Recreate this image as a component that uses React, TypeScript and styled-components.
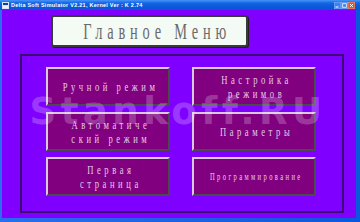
import React from "react";
import styled, { createGlobalStyle } from "styled-components";

const Global = createGlobalStyle`
  html, body { margin: 0; padding: 0; background: #0a5ce0; }
  body { width: 360px; height: 222px; overflow: hidden; }
  * { box-sizing: border-box; }
`;

const Window = styled.div`
  width: 360px;
  height: 222px;
  display: flex;
  flex-direction: column;
  background: linear-gradient(90deg, #2a6ef0 0%, #0a58dc 100%);
`;

const TitleBar = styled.div`
  height: 10px;
  display: flex;
  align-items: center;
  padding: 0 5px 0 2px;
  gap: 2px;
  background: linear-gradient(180deg, #4a94f8 0%, #1266e6 30%, #0a58d8 70%, #0a54d0 100%);
`;

const TitleText = styled.span`
  flex: 1;
  font-family: "Liberation Sans", Arial, sans-serif;
  font-weight: bold;
  font-size: 5.4px;
  letter-spacing: 0.3px;
  color: #ffffff;
  white-space: nowrap;
  line-height: 10px;
`;

const Controls = styled.div`
  display: flex;
  align-items: center;
`;

const Body = styled.div`
  flex: 1;
  margin: 0 4px 4px 2px;
  background: #8000ff;
  position: relative;
  display: flex;
  flex-direction: column;
  align-items: flex-start;
  padding: 5px 12px 5px 18px;
`;

const Header = styled.div`
  margin-left: 31px;
  width: 197px;
  height: 32px;
  background: #f4faf4;
  border: 2px solid #3a3a3a;
  border-radius: 3px;
  box-shadow: 1px 1px 0 #202020;
  display: flex;
  align-items: center;
  justify-content: center;
  overflow: hidden;
`;

const HeaderText = styled.span`
  display: inline-block;
  font-family: "Liberation Serif", "Times New Roman", serif;
  font-size: 24px;
  letter-spacing: 8px;
  color: #6a6a6a;
  transform: scaleX(0.6);
  white-space: nowrap;
  margin-left: 16px;
`;

const Frame = styled.div`
  margin-top: 7px;
  width: 324px;
  height: 159px;
  border: 2px solid #3c0c74;
  padding: 11px 26px 15px 24px;
  display: grid;
  grid-template-columns: 124px 124px;
  grid-template-rows: 39px 39px 39px;
  column-gap: 22px;
  row-gap: 6px;
`;

const MenuButton = styled.div`
  background: #800080;
  border-style: solid;
  border-width: 2px;
  border-color: #d8c8e0 #4a4a4a #4a4a4a #d8c8e0;
  display: flex;
  align-items: center;
  justify-content: center;
  overflow: hidden;
`;

const Label = styled.span<{ $size: number; $spacing: number }>`
  display: inline-block;
  font-family: "Liberation Serif", "Times New Roman", serif;
  font-size: ${(p) => p.$size}px;
  letter-spacing: ${(p) => p.$spacing}px;
  line-height: 14px;
  color: #e6cce6;
  text-align: center;
  white-space: pre;
  transform: scaleX(0.66);
  margin-left: ${(p) => p.$spacing}px;
`;

const Watermark = styled.div`
  position: absolute;
  left: 0;
  right: 0;
  top: 80px;
  text-align: center;
  font-family: "DejaVu Sans", Verdana, sans-serif;
  font-weight: bold;
  font-size: 37px;
  letter-spacing: 4.5px;
  color: rgba(255, 255, 255, 0.24);
  pointer-events: none;
  padding-right: 2px;
  white-space: nowrap;
`;

const AppIcon = () => (
  <svg width="7" height="7" viewBox="0 0 7 7">
    <rect x="0" y="0" width="7" height="7" fill="#d8e4f8" />
    <rect x="1" y="1" width="5" height="2" fill="#1040a0" />
    <rect x="1" y="4" width="5" height="2" fill="#f0f0f0" />
  </svg>
);

const CtrlBtn = ({ kind }: { kind: "min" | "max" | "close" }) => (
  <svg width="7" height="7" viewBox="0 0 7 7">
    <rect
      x="0"
      y="0"
      width="7"
      height="7"
      rx="1"
      fill={kind === "close" ? "#e0582a" : "#3c82f0"}
      stroke="#ffffff"
      strokeOpacity="0.6"
      strokeWidth="0.6"
    />
    {kind === "min" && <rect x="1.5" y="4.5" width="3" height="1" fill="#fff" />}
    {kind === "max" && (
      <rect x="1.7" y="1.7" width="3.6" height="3.6" fill="none" stroke="#fff" strokeWidth="0.8" />
    )}
    {kind === "close" && <path d="M2 2 L5 5 M5 2 L2 5" stroke="#fff" strokeWidth="0.9" />}
  </svg>
);

const items: { text: string; size: number; spacing: number }[] = [
  { text: "Ручной режим", size: 13, spacing: 5.4 },
  { text: "Настройка\nрежимов", size: 13, spacing: 5.4 },
  { text: "Автоматиче\nский режим", size: 13, spacing: 5.4 },
  { text: "Параметры", size: 13, spacing: 5.4 },
  { text: "Первая\nстраница", size: 13, spacing: 5.4 },
  { text: "Программирование", size: 10, spacing: 3.6 },
];

export default function App() {
  return (
    <>
      <Global />
      <Window>
        <TitleBar>
          <AppIcon />
          <TitleText>Delta Soft Simulator V2.21, Kernel Ver : K 2.74</TitleText>
          <Controls>
            <CtrlBtn kind="min" />
            <CtrlBtn kind="max" />
            <CtrlBtn kind="close" />
          </Controls>
        </TitleBar>
        <Body>
          <Header>
            <HeaderText>Главное Меню</HeaderText>
          </Header>
          <Frame>
            {items.map((it) => (
              <MenuButton key={it.text}>
                <Label $size={it.size} $spacing={it.spacing}>
                  {it.text}
                </Label>
              </MenuButton>
            ))}
          </Frame>
          <Watermark>Stankoff.RU</Watermark>
        </Body>
      </Window>
    </>
  );
}
